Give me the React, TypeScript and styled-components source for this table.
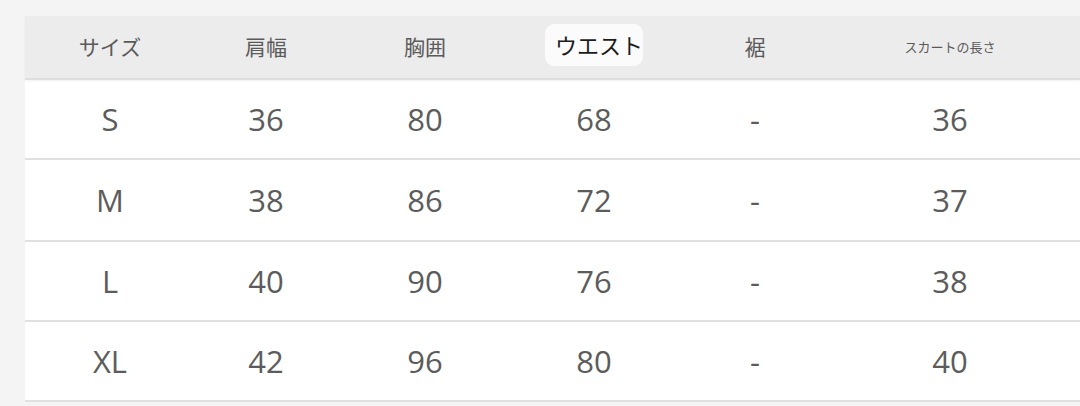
import React from 'react'
import styled, { createGlobalStyle } from 'styled-components'

const GlobalStyle = createGlobalStyle`
  html, body {
    margin: 0;
    padding: 0;
    background: #f4f4f4;
    font-family: "Open Sans", "Noto Sans CJK JP", sans-serif;
  }
`

const Page = styled.div`
  width: 1080px;
  height: 406px;
  padding: 16px 0 0 25px;
  box-sizing: border-box;
  overflow: hidden;
`

const Table = styled.div`
  background: #fff;
  display: flex;
  flex-direction: column;
`

const cols = '170px 142px 176px 162px 160px 230px 1fr'

const HeaderRow = styled.div`
  display: grid;
  grid-template-columns: ${cols};
  height: 62px;
  align-items: center;
  background: #ececec;
  border-bottom: 2px solid #dedede;
  box-shadow: 0 1px 2px rgba(0, 0, 0, 0.06);
`

const HeadCell = styled.div<{ $small?: boolean; $highlight?: boolean }>`
  justify-self: center;
  font-family: "Noto Sans CJK JP", sans-serif;
  font-size: ${p => (p.$small ? '13px' : p.$highlight ? '22px' : '21px')};
  color: ${p => (p.$highlight ? '#1c1c1c' : '#5a5a5a')};
  background: ${p => (p.$highlight ? '#fbfbfb' : 'transparent')};
  border-radius: 9px;
  padding: ${p => (p.$highlight ? '8px 0 10px 10px' : '0')};
  margin-top: ${p => (p.$highlight ? '-4px' : '0')};
  line-height: 1.1;
  white-space: nowrap;
`

const Row = styled.div<{ $h: number }>`
  display: grid;
  grid-template-columns: ${cols};
  height: ${p => p.$h}px;
  align-items: center;
  border-bottom: 2px solid #e0e0e0;
`

const Cell = styled.div`
  justify-self: center;
  font-size: 31px;
  color: #5c5c5c;
  line-height: 1;
`

const rows = [
  { h: 78, v: ['S', '36', '80', '68', '-', '36'] },
  { h: 80, v: ['M', '38', '86', '72', '-', '37'] },
  { h: 78, v: ['L', '40', '90', '76', '-', '38'] },
  { h: 78, v: ['XL', '42', '96', '80', '-', '40'] },
]

export default function App() {
  return (
    <>
      <GlobalStyle />
      <Page>
        <Table>
          <HeaderRow>
            <HeadCell>サイズ</HeadCell>
            <HeadCell>肩幅</HeadCell>
            <HeadCell>胸囲</HeadCell>
            <HeadCell $highlight>ウエスト</HeadCell>
            <HeadCell>裾</HeadCell>
            <HeadCell $small>スカートの長さ</HeadCell>
          </HeaderRow>
          {rows.map(r => (
            <Row key={r.v[0]} $h={r.h}>
              {r.v.map((t, i) => (
                <Cell key={i}>{t}</Cell>
              ))}
            </Row>
          ))}
        </Table>
      </Page>
    </>
  )
}
